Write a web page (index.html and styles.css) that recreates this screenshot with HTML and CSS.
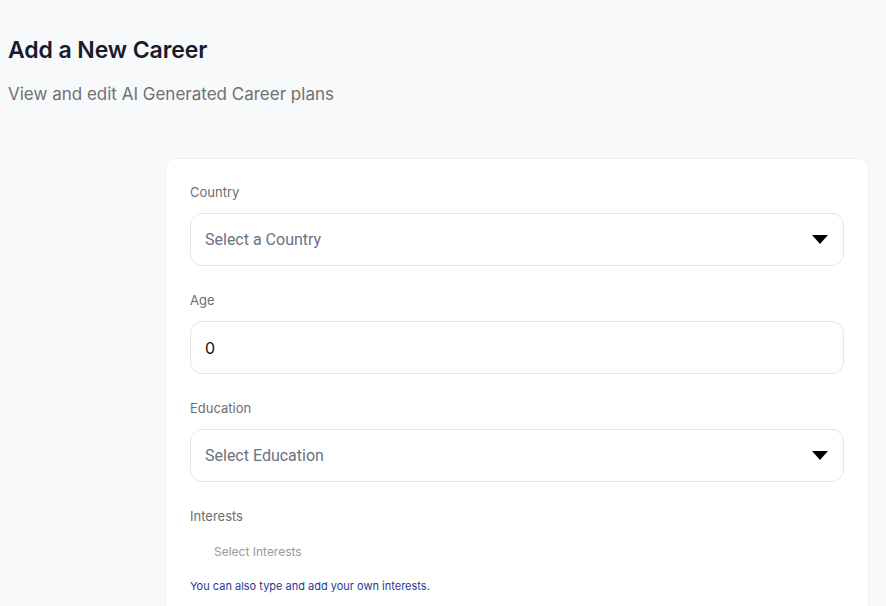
FILE: index.html
```html
<!DOCTYPE html>
<html>
<head>
<meta charset="utf-8">
<link rel="stylesheet" href="styles.css">
</head>
<body>
<div class="page">
  <header class="head">
    <h1 class="title">Add a New Career</h1>
    <p class="subtitle">View and edit AI Generated Career plans</p>
  </header>
  <div class="card">
    <div class="field">
      <label class="label">Country</label>
      <div class="box select">
        <span class="placeholder">Select a Country</span>
        <svg class="caret" width="16" height="9" viewBox="0 0 16 9"><path d="M0 0H16L8 9Z" fill="#000"/></svg>
      </div>
    </div>
    <div class="field">
      <label class="label">Age</label>
      <div class="box input"><span class="value">0</span></div>
    </div>
    <div class="field">
      <label class="label">Education</label>
      <div class="box select">
        <span class="placeholder">Select Education</span>
        <svg class="caret" width="16" height="9" viewBox="0 0 16 9"><path d="M0 0H16L8 9Z" fill="#000"/></svg>
      </div>
    </div>
    <div class="field interests">
      <label class="label">Interests</label>
      <div class="tags"><span class="tag-placeholder">Select Interests</span></div>
      <p class="hint">You can also type and add your own interests.</p>
    </div>
  </div>
</div>
</body>
</html>
```
FILE: styles.css
```css
* { box-sizing: border-box; }
html, body { margin: 0; padding: 0; }
body {
  background: #f8f9fb;
  font-family: Inter, "Noto Sans", sans-serif;
  height: 606px;
  overflow: hidden;
}
.page { padding: 35px 0 0 0; }
.head { padding-left: 8px; }
.title {
  margin: 0;
  font-size: 23px;
  font-weight: 600;
  color: #181b2e;
  line-height: 30px;
  letter-spacing: -0.1px;
}
.subtitle {
  margin: 18px 0 0 0;
  font-size: 17px;
  line-height: 22px;
  color: #707070;
}
.card {
  margin: 53px 0 0 165px;
  width: 704px;
  background: #fff;
  border: 1px solid #eef0f3;
  border-radius: 10px;
  padding: 23px 24px 40px 24px;
  min-height: 500px;
}
.field { margin-bottom: 24px; }
.label {
  display: block;
  font-size: 13px;
  line-height: 20px;
  color: #6e6e6e;
  margin-bottom: 11px;
}
.box {
  height: 53px;
  border: 1px solid #e6e6e6;
  border-radius: 12px;
  display: flex;
  align-items: center;
  padding: 0 14px;
}
.select { justify-content: space-between; }
.placeholder {
  font-family: Roboto, sans-serif;
  font-size: 16px;
  color: #6b7280;
}
.caret { margin-right: 1px; }
.value {
  font-size: 16px;
  color: #111;
}
.interests { margin-bottom: 0; }
.interests .label { margin-bottom: 15px; }
.tags { padding-left: 24px; height: 20px; display: flex; align-items: center; }
.tag-placeholder {
  font-size: 12px;
  color: #9a9a9a;
}
.hint {
  margin: 18px 0 0 0;
  font-size: 11px;
  line-height: 14px;
  color: #1f3a93;
}
```
